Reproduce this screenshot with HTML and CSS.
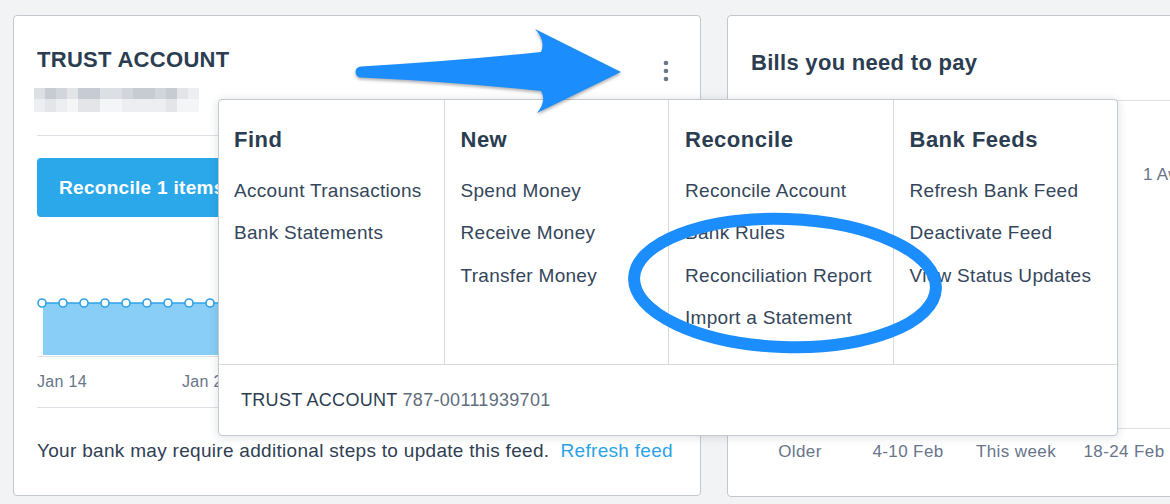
FILE: index.html
```html
<!DOCTYPE html>
<html>
<head>
<meta charset="utf-8">
<link rel="stylesheet" href="styles.css">
</head>
<body>
<div class="page">
  <section class="card card-left">
    <div class="title-row">
      <h2 class="title">TRUST ACCOUNT</h2>
      <svg class="kebab" width="22" height="24" viewBox="0 0 22 24"><circle cx="11" cy="4" r="2.3"/><circle cx="11" cy="12" r="2.3"/><circle cx="11" cy="20" r="2.3"/></svg>
    </div>
    <div class="blur">
      <span class="b2"></span><span class="b4"></span><span class="b3"></span><span class="b1"></span><span class="b4"></span><span class="b4"></span><span class="b2"></span><span class="b2"></span><span class="b3"></span><span class="b4"></span><span class="b4"></span><span class="b3"></span><span class="b4"></span><span class="b1"></span><span class="b0"></span>
      <span class="c1"></span><span class="c2"></span><span class="c1"></span><span class="c0"></span><span class="c2"></span><span class="c2"></span><span class="c0"></span><span class="c0"></span><span class="c1"></span><span class="c1"></span><span class="c1"></span><span class="c1"></span><span class="c2"></span><span class="c0"></span><span class="c0"></span>
    </div>
    <div class="rule"></div>
    <button class="reconcile">Reconcile 1 items</button>
    <svg class="chart" width="642" height="140" viewBox="0 0 642 140">
      <rect class="area" x="6" y="86" width="630" height="52"/>
      <line class="base" x1="0" y1="139.5" x2="642" y2="139.5"/>
      <line class="trend" x1="5" y1="86" x2="635" y2="86"/>
      <g class="dots">
        <circle cx="5" cy="86" r="4"/><circle cx="26" cy="86" r="4"/><circle cx="47" cy="86" r="4"/><circle cx="68" cy="86" r="4"/><circle cx="89" cy="86" r="4"/><circle cx="110" cy="86" r="4"/><circle cx="131" cy="86" r="4"/><circle cx="152" cy="86" r="4"/><circle cx="173" cy="86" r="4"/><circle cx="194" cy="86" r="4"/><circle cx="215" cy="86" r="4"/><circle cx="236" cy="86" r="4"/>
      </g>
    </svg>
    <div class="axis">
      <span class="tick">Jan 14</span>
      <span class="tick">Jan 21</span>
    </div>
    <p class="note">Your bank may require additional steps to update this feed.&nbsp; <a class="link">Refresh feed</a></p>
  </section>

  <section class="card card-right">
    <div class="bills-head">
      <h2 class="title">Bills you need to pay</h2>
    </div>
    <div class="bills-body">
      <span class="ylabel">1 Awaiting payment</span>
    </div>
    <div class="bills-foot">
      <span>Older</span>
      <span>4-10 Feb</span>
      <span>This week</span>
      <span>18-24 Feb</span>
    </div>
  </section>
</div>

<div class="menu">
  <div class="menu-cols">
    <div class="menu-col">
      <h3>Find</h3>
      <ul>
        <li>Account Transactions</li>
        <li>Bank Statements</li>
      </ul>
    </div>
    <div class="menu-col">
      <h3>New</h3>
      <ul>
        <li>Spend Money</li>
        <li>Receive Money</li>
        <li>Transfer Money</li>
      </ul>
    </div>
    <div class="menu-col">
      <h3>Reconcile</h3>
      <ul>
        <li>Reconcile Account</li>
        <li>Bank Rules</li>
        <li>Reconciliation Report</li>
        <li>Import a Statement</li>
      </ul>
    </div>
    <div class="menu-col">
      <h3>Bank Feeds</h3>
      <ul>
        <li>Refresh Bank Feed</li>
        <li>Deactivate Feed</li>
        <li>View Status Updates</li>
      </ul>
    </div>
  </div>
  <div class="menu-foot"><span class="acct">TRUST ACCOUNT</span> <span class="num">787-00111939701</span></div>
</div>

<svg class="annot" width="1170" height="504" viewBox="0 0 1170 504">
  <path class="arrow" d="M361,66.5 Q455,61 541,52 Q546,41 535,29 L621,72 L537,113 Q547,101 541,91 Q455,82 361,77.5 A5.5,5.5 0 0 1 361,66.5 Z"/>
  <ellipse class="ring" cx="785" cy="283" rx="151" ry="64" transform="rotate(2 785 283)"/>
</svg>
</body>
</html>
```

FILE: styles.css
```css
* { box-sizing: border-box; }
html, body {
  margin: 0;
  padding: 0;
}
body {
  width: 1170px;
  height: 504px;
  overflow: hidden;
  position: relative;
  background: #f2f3f5;
  font-family: "Liberation Sans", Arial, Helvetica, sans-serif;
  color: #2f4054;
}
.page {
  display: flex;
  align-items: flex-start;
  gap: 26px;
  padding: 15px 0 0 13px;
}
.card {
  background: #fff;
  border: 1px solid #c3c8cf;
  border-radius: 4px;
  flex: none;
}
.card-left {
  width: 688px;
  height: 481px;
  padding: 0 23px;
}
.card-right {
  width: 480px;
  height: 482px;
}
.title-row {
  display: flex;
  justify-content: space-between;
  align-items: flex-start;
}
.title {
  margin: 0;
  padding-top: 32px;
  font-size: 22px;
  line-height: 24px;
  letter-spacing: 0.3px;
  font-weight: bold;
  color: #2b3d51;
}
.kebab {
  margin-top: 43px;
  margin-bottom: -11px;
  fill: #6a7787;
}
.blur {
  margin: 16px 0 0 -3px;
  display: grid;
  grid-template-columns: repeat(15, 11px);
  grid-template-rows: 11px 13px;
  width: 163px;
}
.b0 { background: #eceef1; }
.b1 { background: #e2e4e8; }
.b2 { background: #dcdfe4; }
.b3 { background: #d2d5db; }
.b4 { background: #c7cbd3; }
.c0 { background: #f4f5f7; }
.c1 { background: #eceef1; }
.c2 { background: #e3e5e9; }
.rule {
  margin-top: 23px;
  border-top: 1px solid #dde1e6;
}
.reconcile {
  display: block;
  margin-top: 22px;
  height: 59px;
  padding: 0 22px;
  border: none;
  border-radius: 4px;
  background: #2aa8ea;
  color: #fff;
  font-family: inherit;
  font-size: 19px;
  letter-spacing: 0.3px;
  font-weight: bold;
  width: 260px;
  text-align: left;
}
.chart {
  display: block;
}
.area { fill: #88cef6; }
.base { stroke: #dfe3e8; stroke-width: 1; }
.trend { stroke: #2ea2e7; stroke-width: 1.5; }
.dots circle {
  fill: #fff;
  stroke: #2ea2e7;
  stroke-width: 1.6;
}
.axis {
  display: flex;
  height: 51px;
  line-height: 50px;
  border-bottom: 1px solid #dde1e6;
  font-size: 16px;
  letter-spacing: 0.3px;
  color: #67758a;
}
.tick {
  flex: none;
  width: 145px;
}
.note {
  margin: 0;
  padding-top: 31px;
  line-height: 24px;
  font-size: 19px;
  letter-spacing: 0.3px;
  color: #2f4054;
  white-space: nowrap;
}
.link {
  color: #2ba3e6;
}

.bills-head {
  height: 85px;
  padding: 0 23px;
  border-bottom: 1px solid #dde1e6;
}
.bills-head .title {
  padding-top: 35px;
}
.bills-body {
  height: 327px;
  padding: 62px 0 0 415px;
  line-height: 24px;
  font-size: 17px;
  letter-spacing: 0.3px;
  color: #67758a;
  white-space: nowrap;
}
.bills-foot {
  border-top: 1px solid #dde1e6;
  display: grid;
  grid-template-columns: repeat(4, 108px);
  padding: 11px 0 0 18px;
  line-height: 24px;
  font-size: 17px;
  letter-spacing: 0.4px;
  color: #67758a;
  text-align: center;
  white-space: nowrap;
}

.menu {
  position: absolute;
  left: 218px;
  top: 99px;
  width: 900px;
  height: 337px;
  background: #fff;
  border: 1px solid #c5cad1;
  border-radius: 4px;
  box-shadow: 0 1px 10px rgba(40, 50, 60, 0.16);
}
.menu-cols {
  display: grid;
  grid-template-columns: repeat(4, 1fr);
  height: 265px;
  border-bottom: 1px solid #d8dce1;
}
.menu-col {
  padding-left: 15px;
}
.menu-col + .menu-col {
  border-left: 1px solid #d8dce1;
  padding-left: 16px;
}
.menu-col h3 {
  margin: 0;
  padding-top: 28px;
  font-size: 22px;
  line-height: 24px;
  letter-spacing: 0.5px;
  font-weight: bold;
  color: #2b3d51;
}
.menu-col ul {
  list-style: none;
  margin: 17.5px 0 0;
  padding: 0;
}
.menu-col li {
  font-size: 19px;
  line-height: 42.5px;
  letter-spacing: 0.3px;
  color: #34465b;
  white-space: nowrap;
}
.menu-foot {
  height: 70px;
  line-height: 70px;
  padding-left: 22px;
  font-size: 18px;
  letter-spacing: 0.3px;
}
.acct { color: #2b3d51; }
.num { color: #5f6d7e; }

.annot {
  position: absolute;
  left: 0;
  top: 0;
  pointer-events: none;
}
.arrow {
  fill: #1b8dfd;
  filter: drop-shadow(0 2px 1.5px rgba(0, 0, 0, 0.3));
}
.ring {
  fill: none;
  stroke: #1b8dfd;
  stroke-width: 12;
}
```
